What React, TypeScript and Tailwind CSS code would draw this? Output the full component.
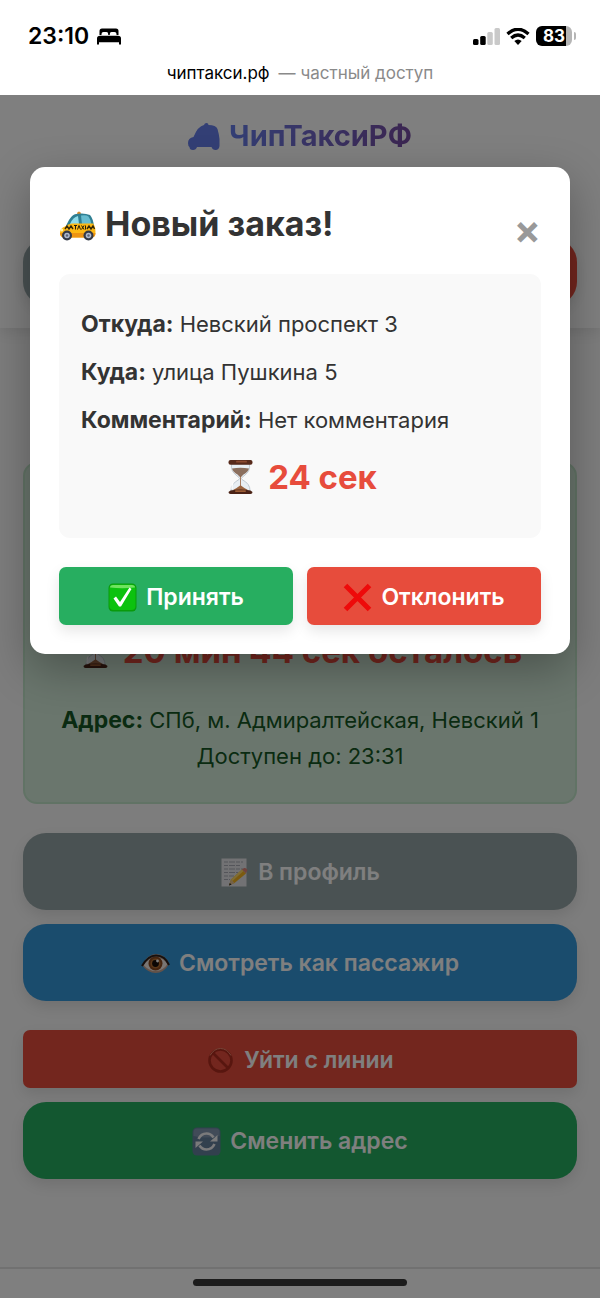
import React, { useState } from 'react';

function TaxiIcon() {
  return (
    <svg viewBox="0 -4 37 34" className="w-[37px] h-[34px] flex-shrink-0" aria-hidden="true">
      <path d="M18 3 Q18 0.5 20 0.5 Q22 0.5 22 3 Z" fill="#d98a2b" />
      <path d="M7 15 C10 9 12 4 17 3 Q25 1.5 31 4 Q34.500 8 35 16 L7 16 Z" fill="#2f7f92" />
      <path d="M11 13 Q14 6 19 5 L20 13 Z" fill="#8fdbe8" />
      <path d="M22 4.500 Q27 3.500 29.500 5.500 Q32 9 32.500 13.500 L23 13.500 Z" fill="#67bccf" />
      <path d="M1 22 Q1 17 6 15.500 Q9 13 13 12.500 L34 12.500 Q36.500 15 36.500 21 Q36.500 26 33 26.500 L5 26.500 Q1 26 1 22 Z" fill="#fdb813" />
      <path d="M1 22 H36.500 Q36.500 26 33 26.500 L5 26.500 Q1 26 1 22 Z" fill="#ee9412" />
      <path d="M6 18 l2 -3 l2 3 l2 -3 l2 3 M28 18 l2 -3 l2 3 l2 -3 l1.500 3" fill="none" stroke="#332709" strokeWidth="1.400" />
      <path d="M15 14.500 h3 M16.500 14.500 v4 M18.500 18.500 l1.500 -4 l1.500 4 M22.500 14.500 l2.500 4 M25 14.500 l-2.500 4 M26.500 14.500 v4" fill="none" stroke="#241c08" strokeWidth="1" />
      <ellipse cx="2.800" cy="19" rx="1.500" ry="1.500" fill="#fff3b0" />
      <circle cx="8" cy="24.500" r="5" fill="#343a46" /><circle cx="8" cy="24.500" r="2.800" fill="#aeb9ce" /><circle cx="8" cy="24.500" r="1.200" fill="#5b6478" />
      <circle cx="29.500" cy="24.500" r="5" fill="#343a46" /><circle cx="29.500" cy="24.500" r="2.800" fill="#aeb9ce" /><circle cx="29.500" cy="24.500" r="1.200" fill="#5b6478" />
    </svg>
  );
}

function HourglassIcon() {
  return (
    <svg viewBox="0 0 35 36" className="w-[35px] h-9 flex-shrink-0" aria-hidden="true">
      <path d="M8.500 5 H26.500 Q27.500 12 22 16 L19 18.500 Q18 19.500 19 20.500 Q27.500 25 27 32 H8 Q7.500 25 16 20.500 Q17 19.500 16 18.500 L13 16 Q7.500 12 8.500 5 Z" fill="#e8eef3" stroke="#b4bec7" strokeWidth="0.800" />
      <path d="M9 9.500 Q17.500 8 26 9.500 Q25 13 20.500 15.500 L18 18 H17 L14.500 15.500 Q10 13 9 9.500 Z" fill="#8b6f5e" />
      <path d="M17.100 17 H17.900 V26.500 Q21 29 25 31 H10 Q14 29 17.100 26.500 Z" fill="#9a6440" />
      <path d="M10 23.500 Q8.800 26 9 30" stroke="#fff" strokeWidth="1.200" fill="none" />
      <rect x="5.500" y="1" width="24" height="4.800" rx="2" fill="#572a1b" /><rect x="13" y="1.800" width="11" height="1.800" rx="0.900" fill="#8b4a30" />
      <path d="M7.500 31.500 Q17.500 29.500 27.500 31.500 L29.500 33 Q29.500 35 27.500 35 H7.500 Q5.500 35 5.500 33 Z" fill="#4b2316" /><rect x="12" y="31.200" width="11" height="1.800" rx="0.900" fill="#9b5c35" />
    </svg>
  );
}

function CheckIcon() {
  return (
    <svg viewBox="0 0 29 29" className="w-[29px] h-[29px]" aria-hidden="true">
      <rect x="0.500" y="0.500" width="28" height="28" rx="4.500" fill="#0a9a0c" />
      <rect x="1.500" y="1.500" width="26" height="25.500" rx="4" fill="#0cc20f" />
      <path d="M2 4.500 Q2 2 5 2 H24 Q27 2 27 4.500 Q14 6 2 4.500 Z" fill="#6fe35f" />
      <path d="M5.500 15.500 L8 13.500 L12 19 L21.500 4.500 L23.500 6 L13 23.500 H11 Z" fill="#fff" />
    </svg>
  );
}

function CrossIcon() {
  return (
    <svg viewBox="0 0 29 29" className="w-[29px] h-[29px]" aria-hidden="true">
      <path d="M2.500 2.500 L26.500 26.500 M26.500 2.500 L2.500 26.500" stroke="#ee0a0a" strokeWidth="5" />
    </svg>
  );
}

function MemoIcon() {
  return (
    <svg viewBox="0 0 29 29" className="w-[29px] h-[29px]" aria-hidden="true">
      <rect x="1.500" y="0.500" width="25" height="28" fill="#e4e4e8" />
      <path d="M4 4 h19 M4 7.500 h17 M4 11 h19 M4 14.500 h14 M4 18 h10 M4 21.500 h6" stroke="#a9abb5" strokeWidth="1.200" strokeDasharray="4 1 6 1" />
      <path d="M9 27.500 L11 21.500 L22 11.500 L26 15.500 L14.500 25 Z" fill="#f7b51e" />
      <path d="M11 21.500 L22 11.500 L23.500 13 L12.500 23 Z" fill="#ffdb6b" />
      <path d="M22 11.500 L24 10 Q26.500 9.500 27.500 12 L26 15.500 Z" fill="#e0877a" />
      <path d="M9 27.500 L11 21.500 L14.500 25 Z" fill="#e8c493" /><path d="M9 27.500 l0.800 -2.500 l1.700 1.500 Z" fill="#222" />
    </svg>
  );
}

function EyeIcon() {
  return (
    <svg viewBox="0 0 29 29" className="w-[29px] h-[29px]" aria-hidden="true">
      <path d="M1 16 Q7 5 15 5 Q24 5 28 15 Q23 24 14.500 24 Q7 24 1 16 Z" fill="#c9a592" />
      <path d="M2.500 16 Q8 8.500 15 8.500 Q22 8.500 26.500 15 Q22 22 14.500 22 Q8 22 2.500 16 Z" fill="#f3ece8" />
      <circle cx="14.500" cy="14.500" r="7" fill="#8a4a20" /><circle cx="14.500" cy="14.500" r="5" fill="#b46f31" />
      <circle cx="14.500" cy="14.500" r="3.400" fill="#140c08" /><circle cx="16.500" cy="12" r="1.400" fill="#fff" />
      <path d="M1 17 Q7 6.500 15 6.500 Q24 6.500 28 16" fill="none" stroke="#2d211d" strokeWidth="2" />
    </svg>
  );
}

function ForbiddenIcon() {
  return (
    <svg viewBox="0 0 29 29" className="w-[29px] h-[29px]" aria-hidden="true">
      <circle cx="14.500" cy="14.500" r="11" fill="none" stroke="#b02c1e" strokeWidth="2.600" />
      <path d="M7 7 L22 22" stroke="#b02c1e" strokeWidth="2.600" />
      <path d="M4 9.500 Q8 2.500 14.500 2.500 Q21 2.500 25 9.500" fill="none" stroke="#f08a70" strokeWidth="1" />
    </svg>
  );
}

function RefreshIcon() {
  return (
    <svg viewBox="0 0 29 29" className="w-[29px] h-[29px]" aria-hidden="true">
      <rect x="0.500" y="0.500" width="28" height="28" rx="4.500" fill="#64809c" />
      <path d="M1.500 5 Q1.500 1.500 5 1.500 H24 Q27.500 1.500 27.500 5 V9 Q14 12 1.500 9 Z" fill="#8297b1" />
      <path d="M6.500 12 Q9 6.500 14.500 6.500 Q19 6.500 21.500 10.500 M22.500 17 Q20 22.500 14.500 22.500 Q10 22.500 7.500 18.500" fill="none" stroke="#f4f4f6" strokeWidth="2.600" />
      <path d="M25.500 8 V14.500 H18 Z M3.500 21 V14.500 H11 Z" fill="#f4f4f6" />
    </svg>
  );
}

function StatusBar() {
  return (
    <div className="flex h-[60px] items-end justify-between pl-7 pr-6 pb-2.5 text-black">
      <div className="flex h-7 items-center gap-2">
        <span className="text-[23px] leading-7 font-semibold">23:10</span>
        <svg viewBox="0 0 24 17" className="w-6 h-[17px]" aria-hidden="true">
          <path d="M2.500 7 V3 Q2.500 0.500 5 0.500 H19 Q21.500 0.500 21.500 3 V7 H19.500 V6 Q19.500 4 17.500 4 H14.500 Q12.800 4 12.800 6 V7 H11.200 V6 Q11.200 4 9.500 4 H6.500 Q4.500 4 4.500 6 V7 Z" />
          <path d="M0 16.500 V10.500 Q0 7.800 3 7.800 H21 Q24 7.800 24 10.500 V16.500 H22 V14.300 H2 V16.500 Z" />
        </svg>
      </div>
      <div className="flex h-7 items-center gap-1.5">
        <svg viewBox="0 0 27 17" className="w-[27px] h-[17px]" aria-hidden="true">
          <rect x="0" y="11" width="5.500" height="6" rx="1.500" /><rect x="7.200" y="8" width="5.500" height="9" rx="1.500" />
          <rect x="14.300" y="4" width="5.500" height="13" rx="1.500" fill="#c9c9c9" /><rect x="21.500" y="0" width="5.500" height="17" rx="1.500" fill="#c9c9c9" />
        </svg>
        <svg viewBox="0 0 24 17" className="w-6 h-[17px]" aria-hidden="true">
          <path d="M1.500 6 Q12 -3.500 22.500 6" fill="none" stroke="#000" strokeWidth="3.300" />
          <path d="M5.200 10 Q12 4 18.800 10" fill="none" stroke="#000" strokeWidth="3.200" />
          <path d="M8.300 13 Q12 10 15.700 13 L12 17 Z" />
        </svg>
        <div className="flex items-center gap-0.5">
          <div className="flex h-5 w-9 items-center justify-center rounded-md bg-[linear-gradient(90deg,#000_82%,#b5b5b5_82%)] text-[17px] leading-5 font-bold text-white">83</div>
          <div className="h-2 w-0.5 rounded-r bg-[#b5b5b5]" />
        </div>
      </div>
    </div>
  );
}

const bigButton = 'flex h-[77px] w-full items-center justify-center gap-[9px] rounded-[23px] pt-0.5 text-[23px] font-semibold text-white shadow-[0_6px_14px_rgba(0,0,0,0.1)]';
const smallButton = 'flex h-[58px] w-full items-center justify-center gap-[9px] rounded-[7px] pt-0.5 text-[23px] font-semibold text-white shadow-[0_6px_14px_rgba(0,0,0,0.1)]';

const order = [
  { label: 'Откуда:', value: 'Невский проспект 3' },
  { label: 'Куда:', value: 'улица Пушкина 5' },
  { label: 'Комментарий:', value: 'Нет комментария' },
];

function OrderModal({ onClose }: { onClose: () => void }) {
  return (
    <div className="absolute inset-0 flex items-start justify-center bg-black/50 pt-[72px]">
      <div role="dialog" aria-labelledby="order-title" className="w-[90%] rounded-[15px] bg-white p-[29px] text-[#333] shadow-[0_15px_45px_rgba(0,0,0,0.3)]">
        <div className="flex items-start justify-between pb-2.5">
          <h2 id="order-title" className="flex items-center gap-[9px] text-[34px] leading-[56px] font-bold"><TaxiIcon /> Новый заказ!</h2>
          <button onClick={onClose} aria-label="Закрыть" className="h-[68px] text-[40px] leading-[66px] font-bold text-[#999]">×</button>
        </div>

        <div className="rounded-[11px] bg-[#f9f9f9] px-[22px] pt-[33px] pb-[35px] text-[22px] leading-[34px]">
          <div className="flex flex-col gap-3.5">
            {order.map((row) => <p key={row.label}><strong className="text-[23px] font-bold">{row.label}</strong> {row.value}</p>)}
            <div className="flex items-center justify-center gap-2.5 text-[33px] leading-[52px] font-bold text-[#e74c3c]"><HourglassIcon /> 24 сек</div>
          </div>
        </div>

        <div className="mt-[29px] flex gap-3.5">
          <button onClick={onClose} className={`${smallButton} bg-[#27ae60]`}><CheckIcon /> Принять</button>
          <button onClick={onClose} className={`${smallButton} bg-[#e74c3c]`}><CrossIcon /> Отклонить</button>
        </div>
      </div>
    </div>
  );
}

export default function App() {
  const [isOpen, setIsOpen] = useState(true);

  return (
    <div className="flex min-h-screen flex-col bg-white font-[Inter,'Noto_Sans',sans-serif]">
      {/* BROWSER TOP */}
      <StatusBar />
      <div className="flex h-[35px] justify-center gap-[9px] text-[17px] leading-[26px] text-black">
        <span>чиптакси.рф</span>
        <span className="text-[#8a8a8a]">— частный доступ</span>
      </div>

      <main className="relative flex-1 overflow-hidden bg-[#fafafa]">
        {/* HEADER */}
        <header className="bg-white px-[23px] pt-5 pb-[23px] shadow-[0_3px_14px_rgba(0,0,0,0.1)]">
          <h1 className="flex items-center justify-center gap-[9px] text-[29px] leading-[42px] font-bold">
            <svg viewBox="0 -1 32 28" className="w-8 h-7" fill="#667eea" aria-hidden="true">
              <path d="M16 2 Q16.500 0 18.500 0 Q20.500 0 20.500 2 Q28 2 29.500 6 Q31 11 31.500 16 V23 Q31 27 27.500 27 Q24.500 27 23.500 24 H9 Q8 27 5 27 Q1.500 27 1.500 24 Q0 23 0 20 Q0 15 5.500 14 Q10 3 16 2 Z" />
            </svg>
            <span className="bg-linear-to-r from-[#667eea] to-[#764ba2] bg-clip-text text-transparent">ЧипТаксиРФ</span>
          </h1>
          <div className="mt-[82px] flex gap-3.5">
            <button aria-label="Профиль" className="h-[66px] flex-1 rounded-[23px] bg-[#95a5a6] shadow-[0_6px_14px_rgba(0,0,0,0.1)]" />
            <button aria-label="Выйти" className="h-[66px] flex-1 rounded-[23px] bg-[#e74c3c] shadow-[0_6px_14px_rgba(0,0,0,0.1)]" />
          </div>
        </header>

        <div className="px-[23px] pt-[134px] pb-[87px]">
          {/* LINE STATUS */}
          <section className="flex min-h-[342px] flex-col justify-end rounded-[14px] border-2 border-[#c3e6cb] bg-[#d4edda] px-4 pb-7 text-center text-[22px] leading-9 text-[#155724]">
            <div className="mb-[30px] flex items-center justify-center gap-2.5 text-[33px] leading-[42px] font-bold text-[#e74c3c]"><HourglassIcon /> 20 мин 44 сек осталось</div>
            <p><strong className="text-[23px] font-bold">Адрес:</strong> СПб, м. Адмиралтейская, Невский 1</p>
            <p>Доступен до: 23:31</p>
          </section>

          <div className="mt-[29px] flex flex-col gap-3.5">
            <button className={`${bigButton} bg-[#95a5a6]`}><MemoIcon /> В профиль</button>
            <button className={`${bigButton} bg-[#3498db]`}><EyeIcon /> Смотреть как пассажир</button>
          </div>
          <div className="mt-[29px] flex flex-col gap-3.5">
            <button className={`${smallButton} bg-[#e74c3c]`}><ForbiddenIcon /> Уйти с линии</button>
            <button className={`${bigButton} bg-[#27ae60]`}><RefreshIcon /> Сменить адрес</button>
          </div>
        </div>

        {isOpen && <OrderModal onClose={() => setIsOpen(false)} />}
      </main>

      <footer className="flex h-[31px] justify-center border-t-2 border-[#717171] bg-[#7f7f7f] pt-[10px]">
        <div className="h-[7px] w-[214px] rounded-full bg-[#1c1c1c]" />
      </footer>
    </div>
  );
}
